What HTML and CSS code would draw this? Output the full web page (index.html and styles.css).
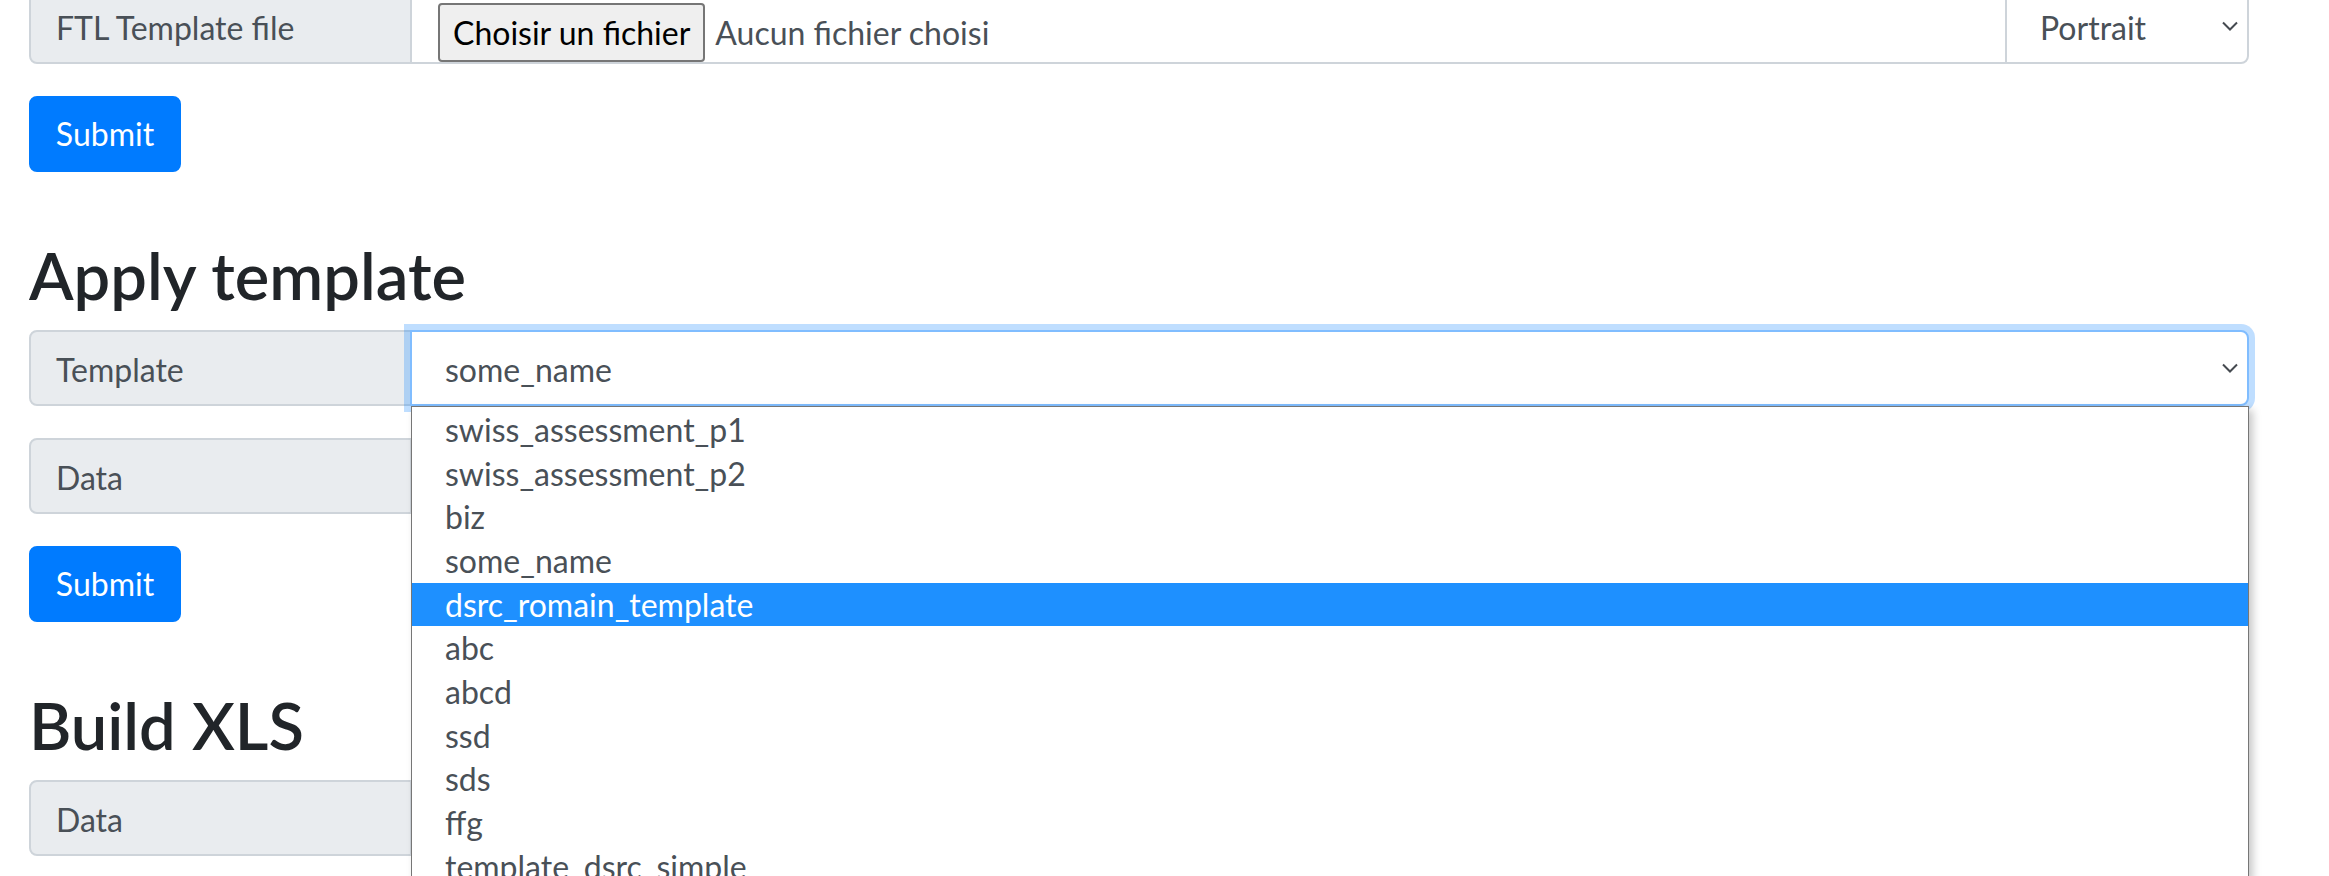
FILE: index.html
```html
<!DOCTYPE html>
<html lang="fr">
<head>
<meta charset="utf-8">
<title>Templates</title>
<link rel="stylesheet" href="styles.css">
</head>
<body>
<div class="page">
  <form class="section">
    <div class="group">
      <span class="label">FTL Template file</span>
      <div class="control file">
        <span class="file-btn">Choisir un fichier</span>
        <span class="file-name">Aucun fichier choisi</span>
      </div>
      <div class="select small">
        <span class="select-text">Portrait</span>
        <svg class="chev" width="16" height="11" viewBox="0 0 16 11"><path d="M1 1.5l7 7 7-7" fill="none" stroke="#454a50" stroke-width="2"/></svg>
      </div>
    </div>
    <button type="button" class="btn">Submit</button>
  </form>

  <form class="section">
    <h2 class="title">Apply template</h2>
    <div class="group">
      <span class="label">Template</span>
      <div class="select wide focus">
        <span class="select-text">some_name</span>
        <svg class="chev" width="16" height="11" viewBox="0 0 16 11"><path d="M1 1.5l7 7 7-7" fill="none" stroke="#454a50" stroke-width="2"/></svg>
        <ul class="popup">
          <li>swiss_assessment_p1</li>
          <li>swiss_assessment_p2</li>
          <li>biz</li>
          <li>some_name</li>
          <li class="active">dsrc_romain_template</li>
          <li>abc</li>
          <li>abcd</li>
          <li>ssd</li>
          <li>sds</li>
          <li>ffg</li>
          <li>template_dsrc_simple</li>
        </ul>
      </div>
    </div>
    <div class="group">
      <span class="label">Data</span>
      <div class="control last"></div>
    </div>
    <button type="button" class="btn">Submit</button>
  </form>

  <form class="section">
    <h2 class="title">Build XLS</h2>
    <div class="group">
      <span class="label">Data</span>
      <div class="control last"></div>
    </div>
  </form>
</div>
</body>
</html>
```
FILE: styles.css
```css
html, body {
  margin: 0;
  padding: 0;
  height: 876px;
  overflow: hidden;
  background: #fff;
}
body {
  font-family: Lato, "Liberation Sans", sans-serif;
  font-size: 32px;
  color: #212529;
}
.page {
  margin-top: -12px;
  padding-left: 29px;
  width: 2220px;
}
.section {
  margin: 0 0 65px;
}
.title {
  margin: 0 0 16px;
  font-size: 65px;
  font-weight: 600;
  line-height: 77px;
  color: #212529;
}
.group {
  display: flex;
  height: 76px;
  margin-bottom: 32px;
}
.label {
  flex: none;
  box-sizing: border-box;
  width: 383px;
  height: 76px;
  padding: 14px 24px 0 25px;
  background: #e9ecef;
  border: 2px solid #ced4da;
  border-radius: 8px 0 0 8px;
  color: #495057;
  line-height: 48px;
  white-space: nowrap;
}
.control {
  flex: 1;
  box-sizing: border-box;
  height: 76px;
  margin-left: -2px;
  border: 2px solid #ced4da;
  background: #fff;
}
.control.last {
  border-radius: 0 8px 8px 0;
}
.file {
  display: flex;
  align-items: flex-start;
  padding: 13px 0 0 26px;
}
.file-btn {
  display: flex;
  align-items: center;
  box-sizing: border-box;
  height: 59px;
  padding: 0 13px;
  background: #efefef;
  border: 2px solid #767676;
  border-radius: 4px;
  color: #000;
  white-space: nowrap;
}
.file-name {
  margin-left: 10px;
  line-height: 59px;
  color: #495057;
  white-space: nowrap;
}
.select {
  position: relative;
  display: flex;
  align-items: center;
  box-sizing: border-box;
  height: 76px;
  margin-left: -2px;
  padding: 0 9px 0 33px;
  background: #fff;
  border: 2px solid #ced4da;
  border-radius: 0 8px 8px 0;
  color: #495057;
}
.select.small {
  flex: none;
  width: 244px;
}
.select.wide {
  flex: 1;
}
.select.focus {
  z-index: 2;
  border-color: #80bdff;
  box-shadow: 0 0 0 6px rgba(0, 123, 255, 0.25);
}
.select-text {
  display: block;
  padding-top: 3px;
  line-height: 48px;
  white-space: nowrap;
}
.chev {
  flex: none;
  margin-left: auto;
}
.popup {
  position: absolute;
  top: calc(100% + 2px);
  left: -1px;
  right: -2px;
  z-index: 5;
  box-sizing: border-box;
  height: 472px;
  margin: 0;
  padding: 1px 0 0;
  list-style: none;
  overflow: hidden;
  background: #fff;
  border: 1px solid #767676;
  border-bottom: none;
  box-shadow: 4px 4px 8px rgba(0, 0, 0, 0.22);
}
.popup li {
  height: 43.67px;
  line-height: 43.67px;
  padding-left: 33px;
  color: #495057;
  white-space: nowrap;
}
.popup li.active {
  background: #1e90ff;
  color: #fff;
}
.btn {
  display: block;
  box-sizing: border-box;
  width: 152px;
  height: 76px;
  padding: 0;
  background: #007bff;
  border: 2px solid #007bff;
  border-radius: 8px;
  color: #fff;
  font-family: Lato, "Liberation Sans", sans-serif;
  font-size: 32px;
  line-height: 1.2;
}
```
